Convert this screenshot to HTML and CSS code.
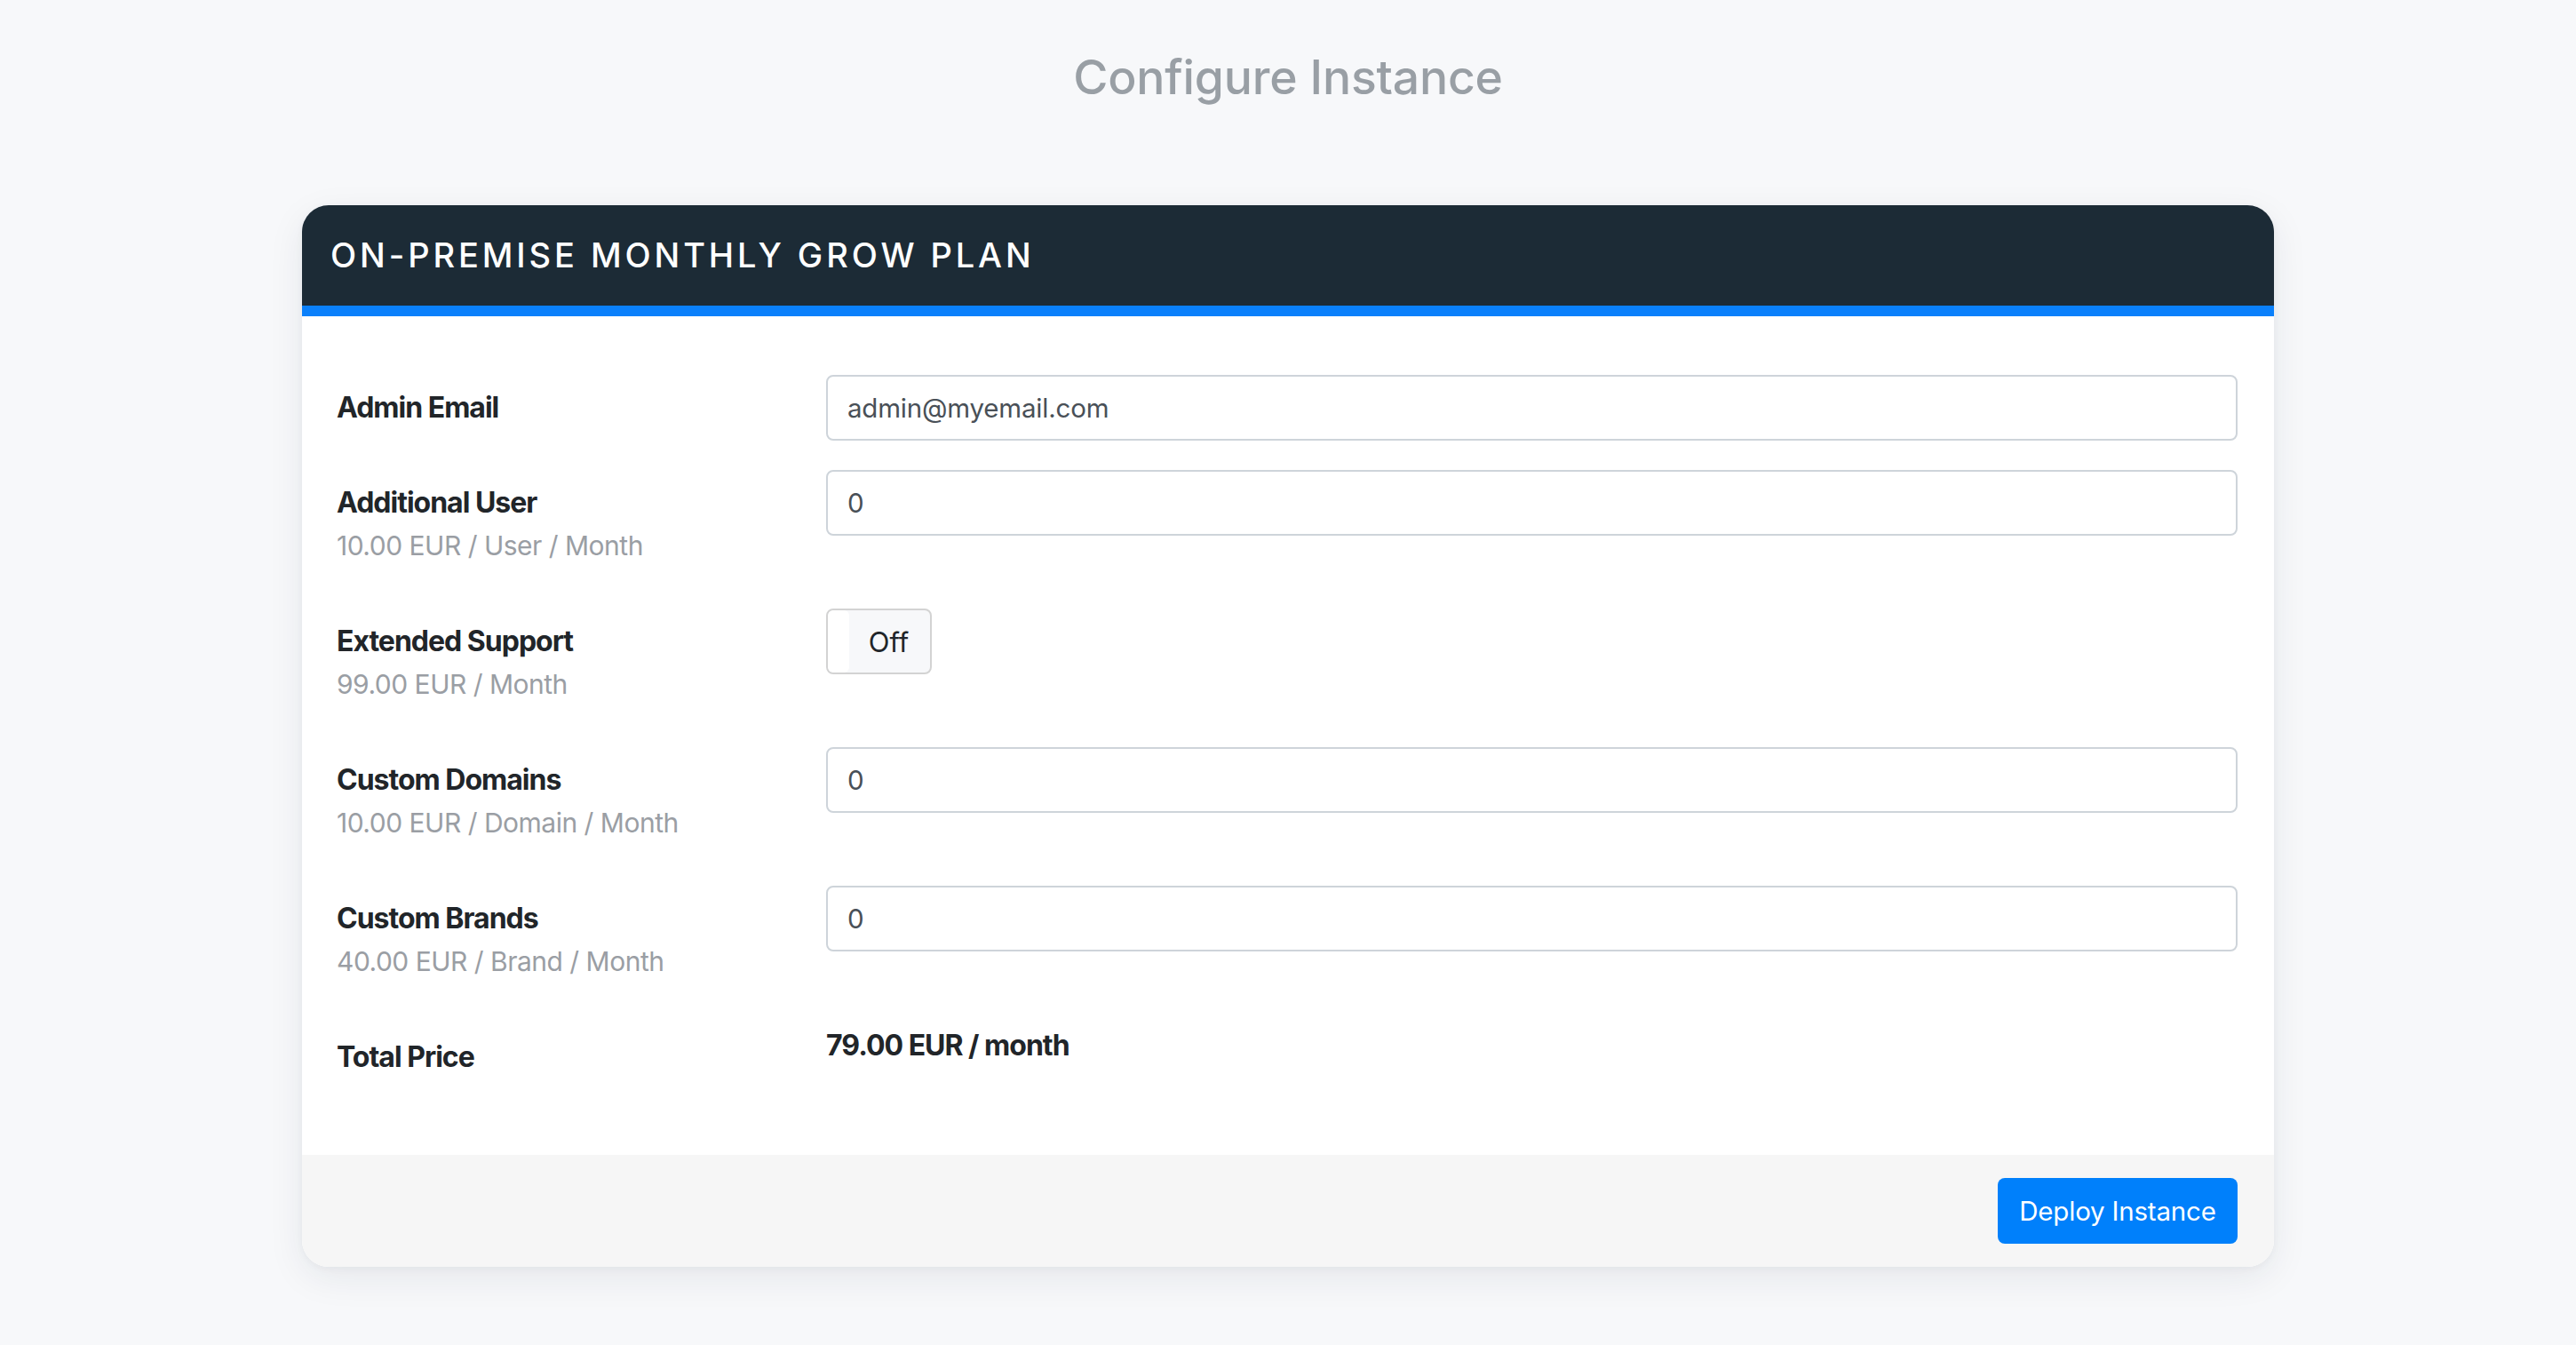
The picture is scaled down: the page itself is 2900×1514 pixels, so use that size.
FILE: index.html
```html
<!DOCTYPE html>
<html lang="en">
<head>
<meta charset="utf-8">
<title>Configure Instance</title>
<link rel="stylesheet" href="styles.css">
</head>
<body>
<div class="page">
  <h1 class="title">Configure Instance</h1>
  <div class="card">
    <div class="card-header">ON-PREMISE MONTHLY GROW PLAN</div>
    <div class="card-body">
      <div class="row">
        <div class="label"><div class="name">Admin Email</div></div>
        <div class="field"><div class="input">admin@myemail.com</div></div>
      </div>
      <div class="row">
        <div class="label"><div class="name">Additional User</div><div class="sub">10.00 EUR / User / Month</div></div>
        <div class="field"><div class="input">0</div></div>
      </div>
      <div class="row">
        <div class="label"><div class="name">Extended Support</div><div class="sub">99.00 EUR / Month</div></div>
        <div class="field"><div class="toggle"><span class="handle"></span><span class="toggle-text">Off</span></div></div>
      </div>
      <div class="row">
        <div class="label"><div class="name">Custom Domains</div><div class="sub">10.00 EUR / Domain / Month</div></div>
        <div class="field"><div class="input">0</div></div>
      </div>
      <div class="row">
        <div class="label"><div class="name">Custom Brands</div><div class="sub">40.00 EUR / Brand / Month</div></div>
        <div class="field"><div class="input">0</div></div>
      </div>
      <div class="row">
        <div class="label"><div class="name">Total Price</div></div>
        <div class="field"><div class="total">79.00 EUR / month</div></div>
      </div>
    </div>
    <div class="card-footer">
      <button class="btn">Deploy Instance</button>
    </div>
  </div>
</div>
</body>
</html>
```

FILE: styles.css
```css
* { box-sizing: border-box; }
html, body { margin: 0; padding: 0; }
body {
  background: #f7f8fa;
  font-family: Inter, "Noto Sans", "Liberation Sans", sans-serif;
  color: #212529;
  width: 2900px;
  height: 1514px;
  overflow: hidden;
}
.page {
  display: flex;
  flex-direction: column;
  align-items: center;
  padding-top: 56px;
}
.title {
  margin: 0;
  font-size: 53.5px;
  line-height: 62px;
  font-weight: 500;
  color: #999fa5;
  letter-spacing: -0.2px;
}
.card {
  margin-top: 113px;
  width: 2220px;
  background: #fff;
  border-radius: 30px;
  overflow: hidden;
  box-shadow: 0 12px 40px rgba(30, 40, 60, 0.08), 0 2px 8px rgba(30, 40, 60, 0.04);
}
.card-header {
  height: 125px;
  background: #1c2b36;
  border-bottom: 12px solid #0a80fb;
  color: #fff;
  font-size: 38px;
  font-weight: 500;
  letter-spacing: 3.9px;
  display: flex;
  align-items: center;
  padding-left: 32px;
  padding-bottom: 2px;
}
.card-body {
  padding: 66px 41px 73px 39px;
  display: flex;
  flex-direction: column;
  gap: 33px;
}
.row {
  display: grid;
  grid-template-columns: 551px 1fr;
  align-items: start;
}
.label {
  padding: 13px 0;
}
.name {
  font-size: 32px;
  line-height: 48px;
  font-weight: 700;
  letter-spacing: -1px;
  color: #212529;
}
.sub {
  font-size: 30px;
  line-height: 49px;
  color: #9a9ea4;
  letter-spacing: -0.5px;
}
.input {
  height: 74px;
  border: 2px solid #ced4da;
  border-radius: 8px;
  padding: 0 22px;
  display: flex;
  align-items: center;
  font-size: 29.5px;
  color: #495057;
  letter-spacing: -0.2px;
}
.toggle {
  width: 119px;
  height: 74px;
  border: 2px solid #d3d3d3;
  border-radius: 8px;
  background: #f7f8fa;
  display: flex;
  align-items: stretch;
  overflow: hidden;
}
.handle {
  width: 24px;
  background: #fff;
  border-radius: 6px;
}
.toggle-text {
  flex: 1;
  display: flex;
  align-items: center;
  justify-content: center;
  font-size: 31px;
  color: #212529;
  padding-right: 2px;
}
.total {
  font-size: 32px;
  line-height: 48px;
  font-weight: 700;
  letter-spacing: -1px;
}
.card-footer {
  background: #f6f6f6;
  padding: 26px 41px;
  display: flex;
  justify-content: flex-end;
}
.btn {
  height: 74px;
  width: 270px;
  border: none;
  border-radius: 8px;
  background: #0080fb;
  color: #fff;
  font-family: Inter, "Noto Sans", "Liberation Sans", sans-serif;
  font-size: 29.5px;
  font-weight: 400;
  letter-spacing: -0.2px;
  cursor: pointer;
}
```
